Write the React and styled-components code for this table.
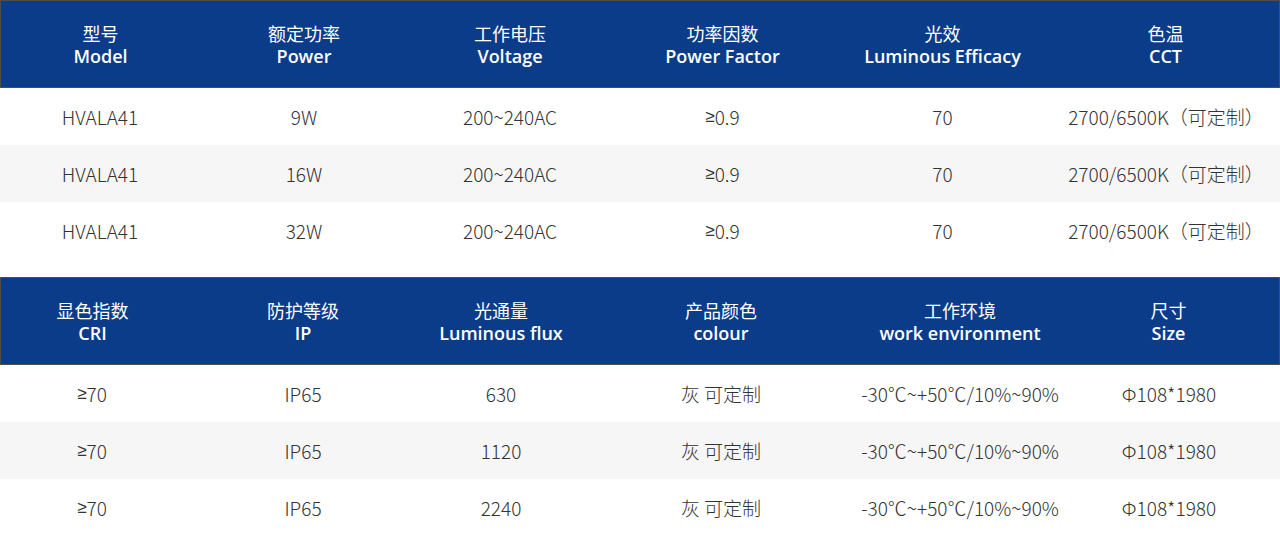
import styled, { createGlobalStyle } from 'styled-components'

const GlobalStyle = createGlobalStyle`
  html, body {
    margin: 0;
    padding: 0;
    background: #ffffff;
  }
  body {
    font-family: "Open Sans", "Noto Sans CJK SC", sans-serif;
  }
`

const Page = styled.div`
  width: 1280px;
  display: flex;
  flex-direction: column;
  gap: 18px;
`

const Table = styled.div`
  display: grid;
  grid-template-columns: ${props => props.$cols};
`

const HeadRow = styled.div`
  grid-column: 1 / -1;
  display: grid;
  grid-template-columns: subgrid;
  height: 88px;
  box-sizing: border-box;
  border: 1px solid #4d4d4d;
  background-color: #0b3c8a;
`

const HeadCell = styled.div`
  display: flex;
  flex-direction: column;
  justify-content: center;
  align-items: center;
  padding-bottom: 2px;
  color: #ffffff;
  white-space: nowrap;
`

const HeadCn = styled.span`
  font-family: "Noto Sans CJK SC", sans-serif;
  font-size: 18px;
  line-height: 26px;
  font-weight: 400;
`

const HeadEn = styled.span`
  font-size: 18px;
  line-height: 21px;
  font-weight: 600;
`

const BodyRow = styled.div`
  grid-column: 1 / -1;
  display: grid;
  grid-template-columns: subgrid;
  height: 57px;
  background-color: ${props => (props.$alt ? '#f6f6f6' : '#ffffff')};
`

const Cell = styled.div`
  display: flex;
  justify-content: center;
  align-items: center;
  color: #333333;
  font-family: "Noto Sans CJK SC", sans-serif;
  font-size: 19px;
  font-weight: 300;
  white-space: nowrap;
`

const Sym = styled.span`
  font-family: "Liberation Sans", sans-serif;
  font-size: 17px;
`

const specs = {
  cols: '200px 208px 204px 221px 219px 228px',
  head: [
    ['型号', 'Model'],
    ['额定功率', 'Power'],
    ['工作电压', 'Voltage'],
    ['功率因数', 'Power Factor'],
    ['光效', 'Luminous Efficacy'],
    ['色温', 'CCT']
  ],
  rows: [
    ['HVALA41', '9W', '200~240AC', '≥0.9', '70', '2700/6500K（可定制）'],
    ['HVALA41', '16W', '200~240AC', '≥0.9', '70', '2700/6500K（可定制）'],
    ['HVALA41', '32W', '200~240AC', '≥0.9', '70', '2700/6500K（可定制）']
  ]
}

const extra = {
  cols: '184px 238px 158px 282px 196px 222px',
  head: [
    ['显色指数', 'CRI'],
    ['防护等级', 'IP'],
    ['光通量', 'Luminous flux'],
    ['产品颜色', 'colour'],
    ['工作环境', 'work environment'],
    ['尺寸', 'Size']
  ],
  rows: [
    ['≥70', 'IP65', '630', '灰 可定制', '-30℃~+50℃/10%~90%', 'Φ108*1980'],
    ['≥70', 'IP65', '1120', '灰 可定制', '-30℃~+50℃/10%~90%', 'Φ108*1980'],
    ['≥70', 'IP65', '2240', '灰 可定制', '-30℃~+50℃/10%~90%', 'Φ108*1980']
  ]
}

// ≥ from the CJK font is the slanted form, so take it from a latin face
function Value ({ text }) {
  if (text.startsWith('≥')) {
    return <Cell><Sym>≥</Sym>{text.slice(1)}</Cell>
  }
  return <Cell>{text}</Cell>
}

function SpecTable ({ data }) {
  return (
    <Table $cols={data.cols}>
      <HeadRow>
        {data.head.map(([cn, en]) => (
          <HeadCell key={en}>
            <HeadCn>{cn}</HeadCn>
            <HeadEn>{en}</HeadEn>
          </HeadCell>
        ))}
      </HeadRow>
      {data.rows.map((row, i) => (
        <BodyRow key={i} $alt={i === 1}>
          {row.map((v, j) => <Value key={j} text={v} />)}
        </BodyRow>
      ))}
    </Table>
  )
}

function App () {
  return (
    <>
      <GlobalStyle />
      <Page>
        <SpecTable data={specs} />
        <SpecTable data={extra} />
      </Page>
    </>
  )
}

export default App
